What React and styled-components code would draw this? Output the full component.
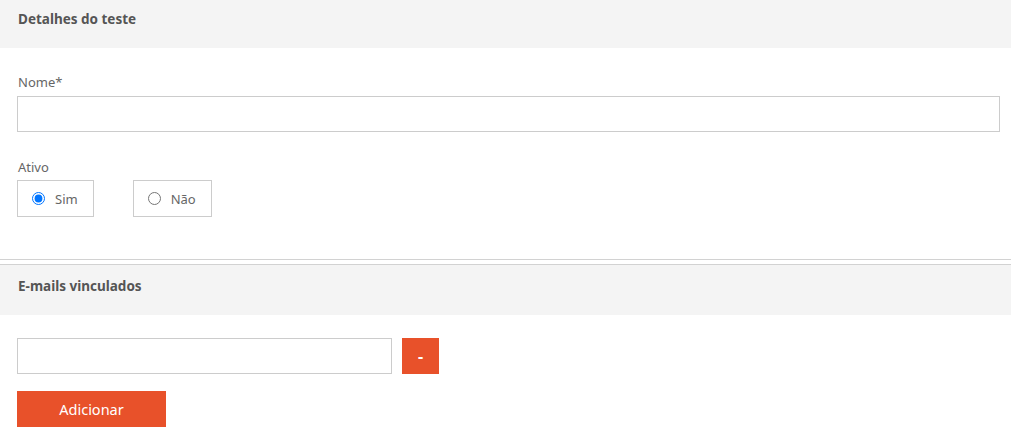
import React, { useState } from 'react';
import styled, { createGlobalStyle } from 'styled-components';

const GlobalStyle = createGlobalStyle`
  body {
    margin: 0;
    background: #fff;
    font-family: "Noto Sans", "Open Sans", sans-serif;
    color: #666;
  }
`;

const Page = styled.div`
  width: 1011px;
`;

const SectionHeader = styled.div`
  height: ${(p) => p.height}px;
  background: #f4f4f4;
  border-top: ${(p) => (p.bordered ? '1px solid #d2d2d2' : 'none')};
  padding: ${(p) => p.top}px 18px 0;
  box-sizing: border-box;
`;

const SectionTitle = styled.h2`
  margin: 0;
  font-size: 13.5px;
  line-height: 18px;
  font-weight: 700;
  color: #555;
`;

const Body = styled.div`
  padding: ${(p) => p.pad};
  border-bottom: ${(p) => (p.ruled ? '1px solid #d2d2d2' : 'none')};
`;

const Spacer = styled.div`
  height: 4px;
`;

const Field = styled.div`
  display: flex;
  flex-direction: column;
  margin-bottom: ${(p) => p.gap || 0}px;
`;

const Label = styled.label`
  font-size: 13px;
  line-height: 16px;
  padding-left: 1px;
  margin-bottom: ${(p) => p.gap}px;
  color: #666;
`;

const TextInput = styled.input`
  box-sizing: border-box;
  height: 36px;
  width: ${(p) => p.width || '100%'};
  border: 1px solid #cccccc;
  padding: 0 10px;
  font: inherit;
  font-size: 13px;
  outline: none;
  background: #fff;
`;

const RadioRow = styled.div`
  display: flex;
  gap: 39px;
`;

const RadioBox = styled.label`
  box-sizing: border-box;
  display: flex;
  align-items: center;
  gap: 10px;
  height: 37px;
  padding: 0 15px 0 14px;
  border: 1px solid #cccccc;
  font-size: 13px;
  color: #666;
  cursor: pointer;

  input {
    margin: 0;
    width: 13px;
    height: 13px;
  }
`;

const EmailRow = styled.div`
  display: flex;
  gap: 10px;
  margin-bottom: 17px;
`;

const OrangeButton = styled.button`
  height: 36px;
  width: ${(p) => p.width}px;
  border: none;
  background: #e8512a;
  color: #fff;
  font-family: inherit;
  font-size: ${(p) => p.size}px;
  font-weight: ${(p) => p.weight || 400};
  padding: 0;
  cursor: pointer;
`;

const App = () => {
  const [active, setActive] = useState('sim');

  return (
    <Page>
      <GlobalStyle />
      <SectionHeader height={48} top={10}>
        <SectionTitle>Detalhes do teste</SectionTitle>
      </SectionHeader>
      <Body pad="26px 11px 42px 17px" ruled>
        <Field gap={27}>
          <Label gap={6}>Nome*</Label>
          <TextInput type="text" />
        </Field>
        <Field>
          <Label gap={5}>Ativo</Label>
          <RadioRow>
            <RadioBox>
              <input
                type="radio"
                name="ativo"
                checked={active === 'sim'}
                onChange={() => setActive('sim')}
              />
              Sim
            </RadioBox>
            <RadioBox>
              <input
                type="radio"
                name="ativo"
                checked={active === 'nao'}
                onChange={() => setActive('nao')}
              />
              Não
            </RadioBox>
          </RadioRow>
        </Field>
      </Body>
      <Spacer />
      <SectionHeader height={51} top={12} bordered>
        <SectionTitle>E-mails vinculados</SectionTitle>
      </SectionHeader>
      <Body pad="23px 11px 8px 17px">
        <EmailRow>
          <TextInput type="email" width="375px" />
          <OrangeButton width={37} size={16} weight={700}>-</OrangeButton>
        </EmailRow>
        <OrangeButton width={149} size={14.5}>Adicionar</OrangeButton>
      </Body>
    </Page>
  );
};

export default App;
